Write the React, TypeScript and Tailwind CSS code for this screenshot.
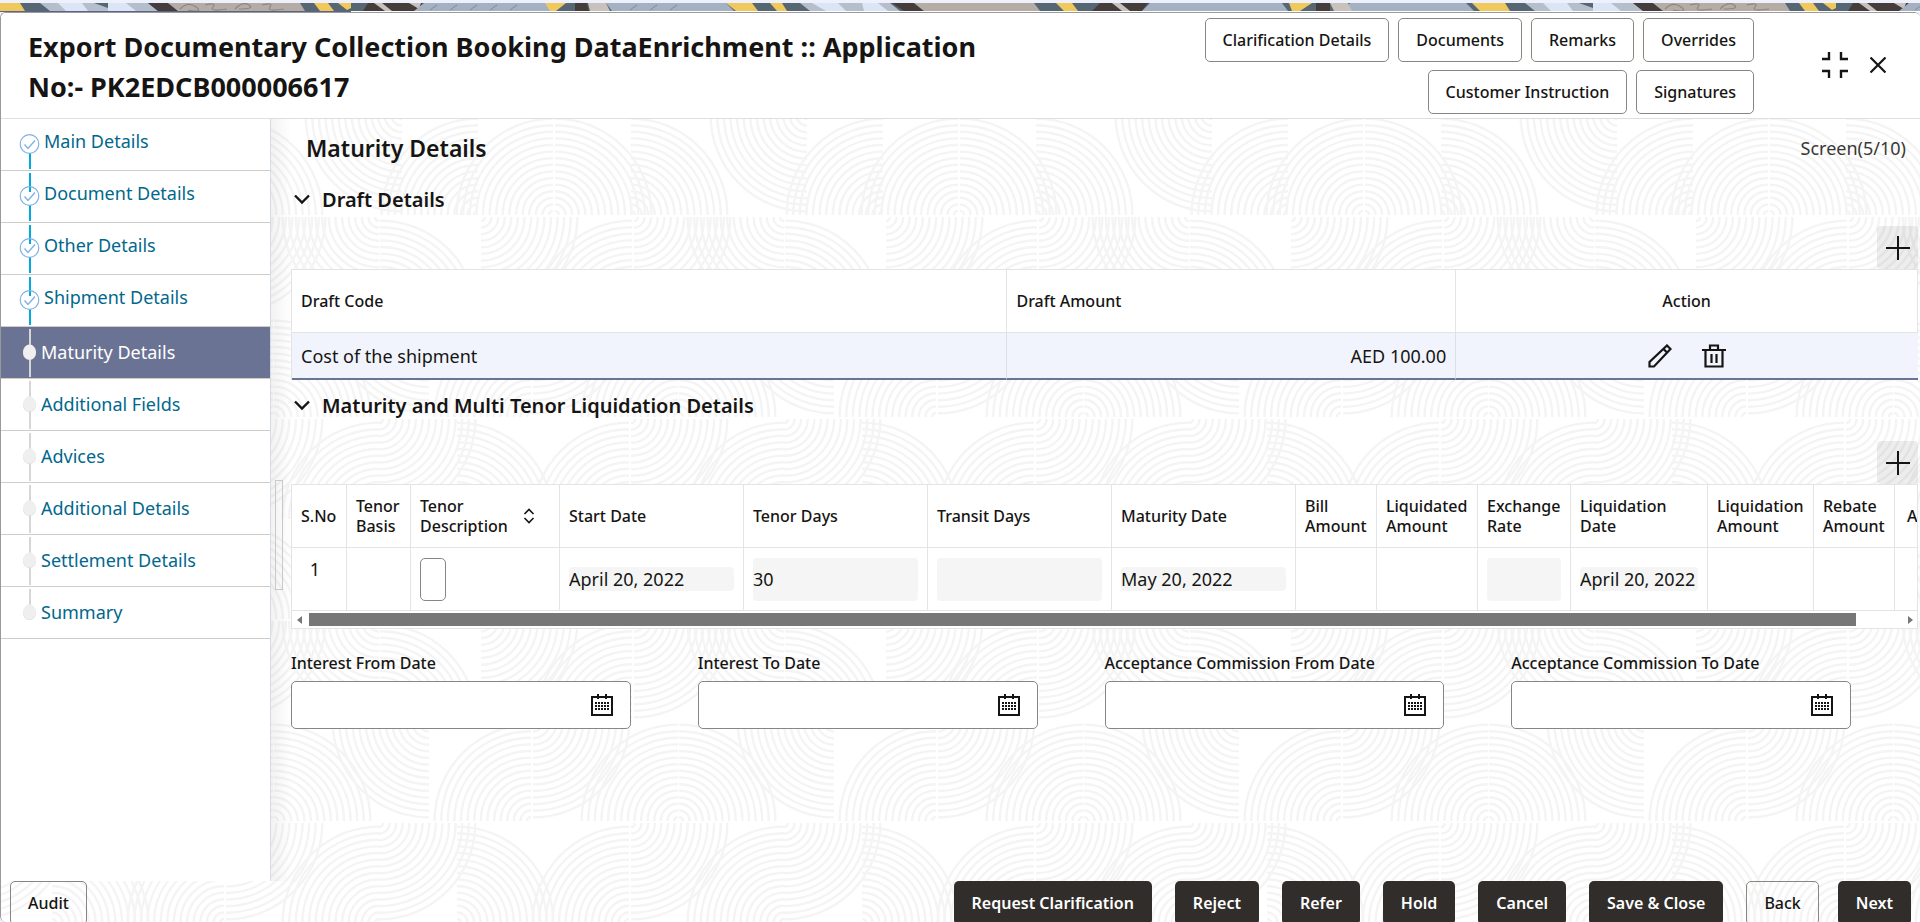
import type { ReactNode } from "react";
import clsx from "clsx";

const steps = [
  { label: "Main Details", status: "done" },
  { label: "Document Details", status: "done" },
  { label: "Other Details", status: "done" },
  { label: "Shipment Details", status: "done" },
  { label: "Maturity Details", status: "current" },
  { label: "Additional Fields", status: "todo" },
  { label: "Advices", status: "todo" },
  { label: "Additional Details", status: "todo" },
  { label: "Settlement Details", status: "todo" },
  { label: "Summary", status: "todo" },
];

const dateFields = [
  { id: "interest-from", label: "Interest From Date" },
  { id: "interest-to", label: "Interest To Date" },
  { id: "acceptance-from", label: "Acceptance Commission From Date" },
  { id: "acceptance-to", label: "Acceptance Commission To Date" },
];

const footerActions = ["Request Clarification", "Reject", "Refer", "Hold", "Cancel", "Save & Close"];

// quarter circles of the backdrop tile: [centre x, centre y, quadrant]
const arcs: [number, number, "tl" | "tr" | "bl" | "br"][] = [
  [148, 100, "tl"], [150, 100, "tr"], [226, 100, "tr"], [402, 0, "bl"], [73, 100, "tl"], [478, 100, "tl"],
  [76, 102, "br"], [227, 202, "tl"], [229, 102, "br"], [379, 102, "bl"], [380, 202, "tr"], [-25, 202, "tr"],
  [24, 202, "bl"], [429, 202, "bl"], [126, 302, "tl"], [128, 202, "br"], [273, 302, "tl"], [274, 302, "tr"],
  [379, 304, "br"], [-26, 304, "br"], [52, 404, "tr"], [224, 404, "tl"], [226, 304, "br"], [379, 404, "tl"],
];

const rings = Array.from({ length: 15 }, (_, i) => 4 + i * 6.6);

function arcPath(cx: number, cy: number, quadrant: string, r: number) {
  const sx = quadrant.endsWith("l") ? -1 : 1;
  const sy = quadrant.startsWith("t") ? -1 : 1;
  const sweep = sx * sy < 0 ? 0 : 1;
  return `M${cx + sx * r} ${cy}A${r} ${r} 0 0 ${sweep} ${cx} ${cy + sy * r}`;
}

function Backdrop() {
  return (
    <svg className="absolute inset-0 size-full" aria-hidden="true">
      <defs>
        <pattern id="arcs" width="405" height="404" patternUnits="userSpaceOnUse" x="-1" y="102">
          {arcs.map(([cx, cy, q], i) => (
            <path
              key={i}
              d={rings.map((r) => arcPath(cx, cy, q, r)).join("")}
              fill="none"
              stroke="#f4f4f4"
              strokeWidth="2.4"
            />
          ))}
        </pattern>
      </defs>
      <rect width="100%" height="100%" fill="#fff" />
      <rect width="100%" height="100%" fill="url(#arcs)" />
    </svg>
  );
}

function Banner() {
  return (
    <svg className="block h-2 w-full" viewBox="0 0 1920 8" preserveAspectRatio="none" aria-hidden="true">
      <defs>
        <pattern id="banner" width="1485" height="8" patternUnits="userSpaceOnUse">
          <rect width="1485" height="8" fill="#566672" />
          <path d="M0 0h20l5 8H0zM314 0h14l6 8h-14zM338 0h13v5l-4 2zM1472 0h13v8h-5z" fill="#efc95c" />
          <path d="M40 0h108l10 8H50z" fill="#b4bfcb" />
          <path d="M58 0h24l6 8H66zM108 0h18l10 8h-28z" fill="#dce5f5" />
          <path d="M94 0h14v5z" fill="#566672" />
          <path d="M148 0h20l10 8h-20z" fill="#443d3b" />
          <path d="M168 0h132l5 8H178z" fill="#b6aca6" />
          <path
            d="M180 6q8 -8 16 -2t-8 3M205 2q12 -3 8 2t14 2M235 6q8 -8 14 -4t-10 4M262 2q12 -3 8 2t14 2"
            fill="none"
            stroke="#8f8681"
            strokeWidth="1.2"
          />
          <path d="M368 0h55l-6 8h-54zM575 0h12l2 8h-14z" fill="#443d3b" />
          <path d="M374 0h8l10 8h-7zM409 0h12l-2 6zM588 0h18l4 8h-20z" fill="#c9c1bb" />
          <path d="M424 0h124l6 8H414zM606 0h120l8 8H612z" fill="#a3b1c3" />
          <path
            d="M430 7l7-5M450 7l7-5M470 7l7-5M490 7l7-5M510 7l7-5M630 7l7-5M650 7l7-5M670 7l7-5"
            stroke="#7d8a99"
          />
          <path d="M545 0h21l-10 8h-6zM726 0h26l6 8h-22zM770 0h12l5 8h-10z" fill="#efc95c" />
          <path d="M800 0h90l10 8h-90z" fill="#b4bfcb" />
          <path d="M812 0h26l8 8h-20zM862 0h16l10 8h-24z" fill="#dce5f5" />
          <path d="M892 0h22l10 8h-20z" fill="#443d3b" />
          <path d="M914 0h120l6 8H924z" fill="#b6aca6" />
          <path d="M1056 0h16l6 8h-14z" fill="#efc95c" />
          <path d="M1100 0h48l-6 8h-50z" fill="#443d3b" />
          <path d="M1112 0h8l10 8h-8z" fill="#c9c1bb" />
          <path d="M1150 0h132l6 8h-146zM1350 0h116l8 8h-130z" fill="#a3b1c3" />
          <path d="M1289 0h23l-12 8h-8z" fill="#efc95c" />
          <path d="M1316 0h14v8h-14z" fill="#443d3b" />
          <path d="M1330 0h18l4 8h-18z" fill="#c9c1bb" />
        </pattern>
      </defs>
      <rect width="1920" height="8" fill="url(#banner)" />
    </svg>
  );
}

function OutlineButton({ children }: { children: ReactNode }) {
  return (
    <button className="h-11 rounded-[5px] border border-[#8b8580] px-[17px] text-base font-medium">{children}</button>
  );
}

function SolidButton({ children }: { children: ReactNode }) {
  return <button className="h-11 rounded-[5px] bg-[#312d2a] px-[18px] font-semibold text-white">{children}</button>;
}

function CalendarIcon() {
  return (
    <svg width="24" height="24" viewBox="0 0 24 24" aria-hidden="true">
      <path d="M2 4h20v18H2zM8 1v5M16 1v5" fill="none" stroke="#161513" strokeWidth="2" />
      <path d="M5 10h14M5 13h14M5 16h14" stroke="#161513" strokeWidth="2" strokeDasharray="2 1" />
    </svg>
  );
}

function SectionHeader({ title }: { title: string }) {
  return (
    <h3 className="ml-[3px] flex h-7 items-center gap-3 text-xl font-semibold">
      <button aria-label={`Collapse ${title}`}>
        <svg width="16" height="16" viewBox="0 0 16 16" aria-hidden="true">
          <path d="M1 3.500L8 10.500L15 3.500" fill="none" stroke="#161513" strokeWidth="2.400" />
        </svg>
      </button>
      {title}
    </h3>
  );
}

function AddButton({ label }: { label: string }) {
  return (
    <button aria-label={label} className="ml-auto flex h-[43px] w-[41px] items-center justify-center rounded-[4px] bg-black/7">
      <svg width="24" height="24" viewBox="0 0 24 24" aria-hidden="true">
        <path d="M12 0v24M0 12h24" stroke="#161513" strokeWidth="2" />
      </svg>
    </button>
  );
}

function StepItem({ label, status, last }: { label: string; status: string; last: boolean }) {
  const done = status === "done";
  const current = status === "current";
  return (
    <li className={clsx("h-[52px] border-b border-[#d0cdc6]", current && "bg-[#6b7394]")}>
      <a href="#" className={clsx("flex h-full gap-1", current ? "text-white" : "text-[#00688c]")}>
        <svg className="ml-[18px] shrink-0" width={done ? 21 : 18} height="51" viewBox={done ? "0 0 21 51" : "0 0 18 51"} aria-hidden="true">
          {done ? (
            <>
              <path d={label === "Main Details" ? "M11 34v16" : "M11 2v19M11 34v16"} stroke="#00a9e0" strokeWidth="2" />
              <circle cx="10.500" cy="25" r="9.300" fill="none" stroke="#7fb2e5" strokeWidth="1.200" />
              <path d="M5.500 25.500l3.500 4l7 -8" fill="none" stroke="#7fb2e5" strokeWidth="1.400" />
            </>
          ) : (
            <>
              <path d={last ? "M11 2v20" : "M11 2v48"} stroke="#d6d6d6" strokeWidth="2" />
              <ellipse cx="10.500" cy="26" rx="6.500" ry="7" fill="#d9d9d9" />
              <ellipse cx="10.500" cy="25" rx="6.500" ry="7.500" fill="#efefef" />
            </>
          )}
        </svg>
        <span className={clsx("text-lg", done ? "pt-2" : "pt-[11px]")}>{label}</span>
      </a>
    </li>
  );
}

const th = "border-r border-b border-[#e4e4e4] px-[9px] text-left leading-5 font-medium";
const td = "border-r border-b border-[#e4e4e4] px-[9px]";

export default function App() {
  return (
    <div className="flex h-screen flex-col overflow-hidden bg-[#eef1fb] pt-[3px] font-['Noto_Sans',sans-serif] text-[#161513]">
      <Banner />
      <div className="flex h-px">
        <div className="w-[351px] bg-[#5b6488]" />
        <div className="flex-1 bg-white" />
      </div>
      <div className="relative flex min-h-0 flex-1 flex-col overflow-hidden rounded-t-[6px] rounded-bl-[6px] border-t border-l border-[#9a9a9a]">
        <Backdrop />

        <header className="relative flex h-[106px] shrink-0 items-start border-b border-[#dfdfdf] bg-white">
          <h1 className="ml-[27px] w-[1000px] pt-[14px] text-[27px] leading-10 font-bold">
            Export Documentary Collection Booking DataEnrichment :: Application No:- PK2EDCB000006617
          </h1>
          <div className="ml-auto flex w-[600px] flex-wrap justify-end gap-x-[9px] gap-y-2 pt-[5px]">
            <OutlineButton>Clarification Details</OutlineButton>
            <OutlineButton>Documents</OutlineButton>
            <OutlineButton>Remarks</OutlineButton>
            <OutlineButton>Overrides</OutlineButton>
            <OutlineButton>Customer Instruction</OutlineButton>
            <OutlineButton>Signatures</OutlineButton>
          </div>
          <div className="flex items-center gap-[22px] pt-[39px] pr-[34px] pl-[68px]">
            <button aria-label="Collapse">
              <svg width="26" height="26" viewBox="0 0 26 26" aria-hidden="true">
                <path d="M0 7h7V0M26 7h-7V0M0 19h7v7M26 19h-7v7" fill="none" stroke="#161513" strokeWidth="2.400" />
              </svg>
            </button>
            <button aria-label="Close">
              <svg width="16" height="16" viewBox="0 0 16 16" aria-hidden="true">
                <path d="M0.500 0.500l15 15M15.500 0.500l-15 15" stroke="#161513" strokeWidth="2.200" />
              </svg>
            </button>
          </div>
        </header>

        <div className="relative flex min-h-0 flex-1">
          <nav className="w-[270px] shrink-0 border-r border-[#d5dce3] bg-white">
            <ul>
              {steps.map((s, i) => (
                <StepItem key={s.label} label={s.label} status={s.status} last={i === steps.length - 1} />
              ))}
            </ul>
          </nav>
          <div className="flex w-5 shrink-0 items-start bg-linear-to-r from-black/5 to-transparent pl-1">
            <div className="mt-[361px] h-[110px] w-2 border border-[#c9c9c9]" />
          </div>

          <main className="flex min-w-0 flex-1 flex-col pr-[2px]">
            <div className="flex h-[67px] items-center justify-between pr-3 pb-[9px]">
              <h2 className="ml-[15px] text-[23px] font-semibold">Maturity Details</h2>
              <p className="text-lg text-[#3a3836]">Screen(5/10)</p>
            </div>

            <SectionHeader title="Draft Details" />
            <div className="mt-3 flex">
              <AddButton label="Add draft" />
            </div>
            <table className="w-full table-fixed border-separate border-spacing-0 border-t border-l border-[#e4e4e4] bg-white">
              <thead>
                <tr className="h-[63px]">
                  <th className={clsx(th, "w-[44%]")}>Draft Code</th>
                  <th className={clsx(th, "w-[27.6%]")}>Draft Amount</th>
                  <th className="border-r border-b border-[#e4e4e4] font-medium">Action</th>
                </tr>
              </thead>
              <tbody>
                <tr className="h-[47px] bg-[#f1f4fd] text-lg">
                  <td className="border-r border-b-2 border-r-[#dcdfe8] border-b-[#6b7394] px-[9px]">Cost of the shipment</td>
                  <td className="border-r border-b-2 border-r-[#dcdfe8] border-b-[#6b7394] px-[9px] text-right">AED 100.00</td>
                  <td className="border-b-2 border-b-[#6b7394]">
                    <div className="flex items-center justify-center gap-[30px]">
                      <button aria-label="Edit draft">
                        <svg width="24" height="24" viewBox="0 0 24 24" aria-hidden="true">
                          <path
                            d="M1.500 22.500v-4.500L19 1.500L22.500 5L6 22.500zM15.500 5l3.500 3.500"
                            fill="none"
                            stroke="#161513"
                            strokeWidth="2.200"
                          />
                        </svg>
                      </button>
                      <button aria-label="Delete draft">
                        <svg width="24" height="24" viewBox="0 0 24 24" aria-hidden="true">
                          <path d="M0 6h24M8 6V1.500h8V6M3.500 6v16.500h17V6M9.500 10v9M14.500 10v9" fill="none" stroke="#161513" strokeWidth="2.200" />
                        </svg>
                      </button>
                    </div>
                  </td>
                </tr>
              </tbody>
            </table>

            <div className="mt-3">
              <SectionHeader title="Maturity and Multi Tenor Liquidation Details" />
            </div>
            <div className="mt-[21px] flex">
              <AddButton label="Add tenor" />
            </div>
            <div className="overflow-hidden border border-[#e4e4e4] bg-white">
              <table className="w-[1720px] table-fixed border-separate border-spacing-0">
                <thead>
                  <tr className="h-[63px]">
                    <th className={clsx(th, "w-[55px]")}>S.No</th>
                    <th className={clsx(th, "w-16")}>Tenor Basis</th>
                    <th className={clsx(th, "w-[149px]")}>
                      <div className="flex items-center justify-between pr-[15px]">
                        Tenor
                        <br />
                        Description
                        <button aria-label="Sort by tenor description">
                          <svg width="12" height="16" viewBox="0 0 12 16" aria-hidden="true">
                            <path d="M1.500 6L6 1.500L10.500 6M1.500 10L6 14.500L10.500 10" fill="none" stroke="#161513" strokeWidth="1.600" />
                          </svg>
                        </button>
                      </div>
                    </th>
                    <th className={clsx(th, "w-[184px]")}>Start Date</th>
                    <th className={clsx(th, "w-[184px]")}>Tenor Days</th>
                    <th className={clsx(th, "w-[184px]")}>Transit Days</th>
                    <th className={clsx(th, "w-[184px]")}>Maturity Date</th>
                    <th className={clsx(th, "w-[81px]")}>Bill Amount</th>
                    <th className={clsx(th, "w-[101px]")}>Liquidated Amount</th>
                    <th className={clsx(th, "w-[93px]")}>Exchange Rate</th>
                    <th className={clsx(th, "w-[137px]")}>Liquidation Date</th>
                    <th className={clsx(th, "w-[106px]")}>Liquidation Amount</th>
                    <th className={clsx(th, "w-[81px]")}>Rebate Amount</th>
                    <th className="border-b border-[#e4e4e4] px-3 text-left font-medium">Action</th>
                  </tr>
                </thead>
                <tbody>
                  <tr className="h-[63px] text-lg">
                    <td className={clsx(td, "pt-[7px] text-center align-top")}>
                      <span className="mr-2">1</span>
                    </td>
                    <td className={td} />
                    <td className={td}>
                      <input aria-label="Tenor description" className="block h-[43px] w-[26px] rounded-[5px] border border-[#8b8580]" />
                    </td>
                    <td className={td}>
                      <input aria-label="Start date" readOnly value="April 20, 2022" className="block h-6 w-full rounded-[4px] bg-[#f5f5f5]" />
                    </td>
                    <td className={td}>
                      <input aria-label="Tenor days" readOnly value="30" className="block h-[43px] w-full rounded-[4px] bg-[#f5f5f5]" />
                    </td>
                    <td className={td}>
                      <input aria-label="Transit days" readOnly className="block h-[43px] w-full rounded-[4px] bg-[#f5f5f5]" />
                    </td>
                    <td className={td}>
                      <input aria-label="Maturity date" readOnly value="May 20, 2022" className="block h-6 w-full rounded-[4px] bg-[#f5f5f5]" />
                    </td>
                    <td className={td} />
                    <td className={td} />
                    <td className={td}>
                      <input aria-label="Exchange rate" readOnly className="block h-[43px] w-full rounded-[4px] bg-[#f5f5f5]" />
                    </td>
                    <td className={td}>
                      <input aria-label="Liquidation date" readOnly value="April 20, 2022" className="block h-6 w-full rounded-[4px] bg-[#f5f5f5]" />
                    </td>
                    <td className={td} />
                    <td className={td} />
                    <td className="border-b border-[#e4e4e4]" />
                  </tr>
                </tbody>
              </table>
              <div className="flex h-[17px] items-center">
                <svg className="shrink-0" width="17" height="10" viewBox="0 0 17 10" aria-hidden="true">
                  <path d="M10 1v8L5 5z" fill="#777" />
                </svg>
                <div className="flex-1">
                  <div className="h-[13px] w-[97%] bg-[#777]" />
                </div>
                <svg className="shrink-0" width="13" height="10" viewBox="0 0 13 10" aria-hidden="true">
                  <path d="M4 1v8l5 -4z" fill="#777" />
                </svg>
              </div>
            </div>

            <div className="mt-[22px] grid grid-cols-4">
              {dateFields.map((f) => (
                <div key={f.id} className="pr-[67px]">
                  <label htmlFor={f.id} className="block font-medium">
                    {f.label}
                  </label>
                  <div className="mt-[6px] flex h-12 items-center rounded-[5px] border border-[#8b8580] bg-white pr-4">
                    <input id={f.id} className="h-full min-w-0 flex-1 px-3 text-lg outline-none" />
                    <button aria-label={`Select ${f.label}`}>
                      <CalendarIcon />
                    </button>
                  </div>
                </div>
              ))}
            </div>
          </main>
        </div>

        <footer className="relative flex h-[41px] shrink-0 items-start px-[9px]">
          <OutlineButton>Audit</OutlineButton>
          <div className="ml-auto flex gap-[23px]">
            {footerActions.map((label) => (
              <SolidButton key={label}>{label}</SolidButton>
            ))}
          </div>
          <div className="ml-[23px] flex gap-[19px]">
            <OutlineButton>Back</OutlineButton>
            <SolidButton>Next</SolidButton>
          </div>
        </footer>
      </div>
    </div>
  );
}
